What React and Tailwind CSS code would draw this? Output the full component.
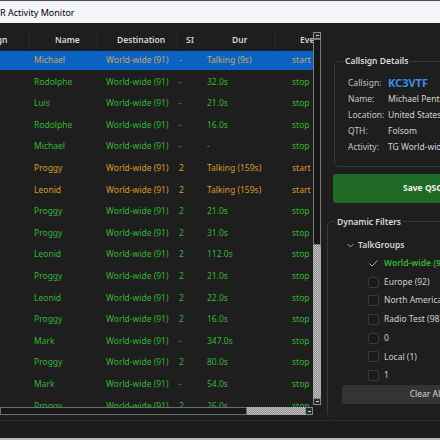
import React from 'react';

const rows = [
  { name: 'Michael', si: '-', dur: 'Talking (9s)', ev: 'start', tone: 'sel' },
  { name: 'Rodolphe', si: '-', dur: '32.0s', ev: 'stop' },
  { name: 'Luis', si: '-', dur: '21.0s', ev: 'stop' },
  { name: 'Rodolphe', si: '-', dur: '16.0s', ev: 'stop' },
  { name: 'Michael', si: '-', dur: '-', ev: 'stop' },
  { name: 'Proggy', si: '2', dur: 'Talking (159s)', ev: 'start', tone: 'live' },
  { name: 'Leonid', si: '2', dur: 'Talking (159s)', ev: 'start', tone: 'live' },
  { name: 'Proggy', si: '2', dur: '21.0s', ev: 'stop' },
  { name: 'Proggy', si: '2', dur: '31.0s', ev: 'stop' },
  { name: 'Leonid', si: '2', dur: '112.0s', ev: 'stop' },
  { name: 'Proggy', si: '2', dur: '21.0s', ev: 'stop' },
  { name: 'Leonid', si: '2', dur: '22.0s', ev: 'stop' },
  { name: 'Proggy', si: '2', dur: '16.0s', ev: 'stop' },
  { name: 'Mark', si: '-', dur: '347.0s', ev: 'stop' },
  { name: 'Proggy', si: '2', dur: '80.0s', ev: 'stop' },
  { name: 'Mark', si: '-', dur: '54.0s', ev: 'stop' },
  { name: 'Proggy', si: '2', dur: '26.0s', ev: 'stop' },
];

const toneClass = {
  sel: 'text-[#c9a862]',
  live: 'text-[#d89a2c]',
  idle: 'text-[#35b535]',
};

const talkGroups = [
  { label: 'Europe (92)' },
  { label: 'North America' },
  { label: 'Radio Test (98)' },
  { label: '0' },
  { label: 'Local (1)' },
  { label: '1' },
];

const checker =
  'bg-[image:repeating-conic-gradient(#8c8c8c_0%_25%,#c6c6c6_0%_50%)] bg-[length:2px_2px]';

const ScrollBtn = ({ wide }) => (
  <div
    className={`${wide ? 'w-[8px] h-[8px]' : 'w-[8px] h-[7px]'} shrink-0 border border-[#8a8a8a] bg-[#2a2a2a] flex items-center justify-center`}
  >
    <div className="w-[3px] h-[1px] bg-[#cfcfcf]" />
  </div>
);

const DetailRow = ({ label, children, tall }) => (
  <div className={`flex items-center ${tall ? 'h-[17px]' : 'h-[16px]'}`}>
    <span className="w-[40px] shrink-0 text-[#c4c4c4]">{label}</span>
    <span className="whitespace-nowrap text-[#d4d4d4]">{children}</span>
  </div>
);

const Table = () => (
  <div className="w-[313px] h-full overflow-hidden">
    <div className="ml-[-52px] w-[408px]">
      {/* header */}
      <div className="h-[26.5px] pt-[8px] flex font-semibold text-[#d6d6d6]">
        <div className="w-[82px] pl-[27px] flex items-center border-r border-[#2b2b2b]">Callsign</div>
        <div className="w-[68px] pl-[25px] flex items-center border-r border-[#2b2b2b]">Name</div>
        <div className="w-[80px] pl-[19px] flex items-center border-r border-[#2b2b2b]">Destination</div>
        <div className="w-[24px] pl-[8px] flex items-center">SI</div>
        <div className="w-[74px] pl-[30px] flex items-center border-r border-[#2b2b2b]">Dur</div>
        <div className="w-[80px] pl-[24px] flex items-center">Event</div>
      </div>
      {rows.map((r, i) => (
        <div key={i} className="h-[21.6px] py-[1.5px]">
          <div
            className={`h-full flex items-center whitespace-nowrap ${
              r.tone === 'sel' ? 'bg-[#0a63c2]' : ''
            } ${toneClass[r.tone || 'idle']}`}
          >
            <div className="w-[82px]" />
            <div className="w-[68px] pl-[4px]">{r.name}</div>
            <div className="w-[80px] pl-[8px]">World-wide (91)</div>
            <div className="w-[24px] pl-[1px]">{r.si}</div>
            <div className="w-[74px] pl-[5px]">{r.dur}</div>
            <div className="w-[80px] pl-[16px]">{r.ev}</div>
          </div>
        </div>
      ))}
    </div>
  </div>
);

const LeftPane = () => (
  <div className="w-[322px] shrink-0 flex flex-col">
    <div className="h-[384px] flex">
      <Table />
      <div className="w-[8px] flex flex-col pt-[9px] pb-[2px]">
        <ScrollBtn />
        <div className="h-[206px] shrink-0 border border-[#7a7a7a] bg-[#171717]" />
        <div className={`flex-1 ${checker}`} />
        <ScrollBtn />
      </div>
    </div>
    <div className="h-[8px] w-[313px] flex">
      <div className="w-[247px] border border-[#6e6e6e] bg-[#171717]" />
      <div className={`flex-1 ${checker}`} />
      <ScrollBtn wide />
    </div>
  </div>
);

const RightPane = () => (
  <div className="flex-1 overflow-hidden flex flex-col">
    <fieldset className="mt-[34px] ml-[12px] w-[180px] border border-[#3a3a3a] rounded-[5px] pl-[13px] pt-[9px] pb-[10px]">
      <legend className="ml-[-5px] px-[2px] font-semibold text-[#dadada]">Callsign Details</legend>
      <DetailRow label="Callsign:" tall>
        <span className="text-[11px] font-bold text-[#3b8fea]">KC3VTF</span>
      </DetailRow>
      <DetailRow label="Name:">Michael Pentimalli</DetailRow>
      <DetailRow label="Location:">United States</DetailRow>
      <DetailRow label="QTH:">Folsom</DetailRow>
      <DetailRow label="Activity:">TG World-wide</DetailRow>
    </fieldset>

    <button className="mt-[7px] ml-[11px] w-[180px] h-[29px] shrink-0 rounded-[3px] bg-[#1f6b26] font-bold text-[#f0f0f0]">
      Save QSO
    </button>

    <fieldset className="mt-[15px] ml-[5px] w-[200px] border border-[#3a3a3a] rounded-[5px] pt-[10px] pb-[13px]">
      <legend className="ml-[7px] px-[2px] font-semibold text-[#dadada]">Dynamic Filters</legend>
      <div className="h-[146px] overflow-hidden">
        <div className="h-[18px] flex items-center pl-[19px] text-[#d2d2d2] font-semibold">
          <svg width="7" height="5" viewBox="0 0 7 5" className="mr-[4px]">
            <polyline points="0.5,1 3.5,4 6.5,1" fill="none" stroke="#a8a8a8" strokeWidth="1" />
          </svg>
          TalkGroups
        </div>
        <div className="h-[18.7px] flex items-center pl-[41px] text-[#36b536] font-semibold whitespace-nowrap">
          <svg width="9" height="7" viewBox="0 0 9 7" className="mr-[6px]">
            <polyline points="0.5,3.5 3,6 8.5,0.5" fill="none" stroke="#a8a8a8" strokeWidth="1" />
          </svg>
          World-wide (91)
        </div>
        {talkGroups.map((g, i) => (
          <div key={i} className="h-[18.7px] flex items-center pl-[40px] text-[#d0d0d0] whitespace-nowrap">
            <div className="w-[11px] h-[11px] mr-[5px] rounded-[2px] border border-[#3a3a3a] bg-[#1b1b1b]" />
            {g.label}
          </div>
        ))}
      </div>
      <button className="mt-[3px] ml-[14px] w-[168px] h-[19px] block rounded-[3px] bg-[#343434] text-[#d4d4d4]">
        Clear All
      </button>
    </fieldset>
  </div>
);

export default function App() {
  return (
    <div className="w-[440px] h-[440px] overflow-hidden flex flex-col bg-[#1e1e1e] font-['Noto_Sans',sans-serif] text-[8.5px] leading-none">
      <div className="h-[1px] bg-[#4c4c4c]" />
      <div className="h-[22px] shrink-0 flex items-center pt-[1px] bg-[#f3f5f9] text-black text-[9px]">
        R Activity Monitor
      </div>
      <div className="h-[394px] shrink-0 flex">
        <LeftPane />
        <RightPane />
      </div>
      <div className="flex-1 flex flex-col">
        <div className="h-[3px]" />
        <div className="flex-1 border-t border-[#2c2c2c] bg-[#1c1c1c]" />
        <div className="h-[2px] bg-[#b8b8b8]" />
      </div>
    </div>
  );
}
